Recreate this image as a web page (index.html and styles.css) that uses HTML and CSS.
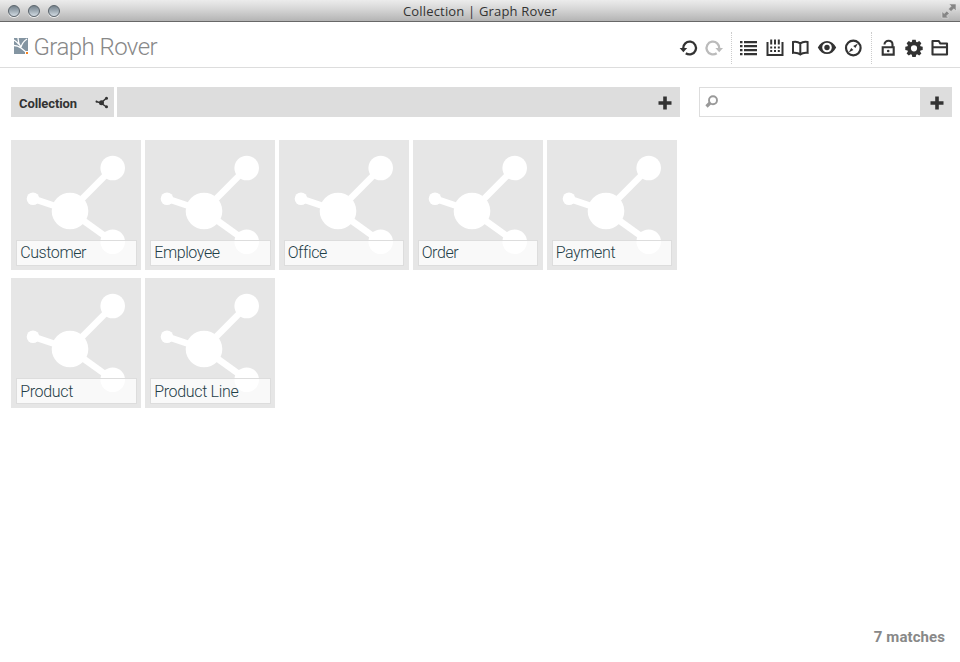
FILE: index.html
```html
<!DOCTYPE html>
<html lang="en">
<head>
<meta charset="utf-8">
<title>Collection | Graph Rover</title>
<link rel="stylesheet" href="styles.css">
</head>
<body>
<svg width="0" height="0" class="defs">
  <symbol id="graph" viewBox="0 0 130 130">
    <path d="M22 58.700 59 71 101.700 28M59 71l42.700 30.700" fill="none" stroke="#fff" stroke-width="6.500"/>
    <circle cx="59" cy="71" r="18.300"/><circle cx="101.700" cy="28" r="12.300"/><circle cx="22" cy="58.700" r="6.300"/><circle cx="101.700" cy="101.700" r="12.300"/>
  </symbol>
</svg>
<div class="window">
  <div class="titlebar">
    <div class="lights"><i></i><i></i><i></i></div>
    <div class="title">Collection | Graph Rover</div>
    <svg class="expand" width="16" height="16" viewBox="0 0 16 16"><path d="M8 1h7v7l-2.200-2.200L10 8.600 7.400 6l2.800-2.800zM1 8.500l2.200 2L5.800 8l2.400 2.400-2.600 2.600L7.500 15H1z" fill="#858585" stroke="#e0e0e0" stroke-width=".6"/></svg>
  </div>
  <header class="header">
    <div class="brand">
      <svg width="14" height="16" viewBox="0 0 14 16"><path d="M0 0h14v16H0z" fill="#8495a2"/><path d="M0 7.500c3 0 5 1 7 2.500l5.500 4.500M4 0c0 3 .5 6 3 9.500M13 1C10 3 8 5.500 7 9M0 2c1.500 1 3.500 2.500 4.800 4.500" fill="none" stroke="#fff" stroke-width="1.300"/><path d="M11 13h3v3h-3z" fill="#fff"/><path d="M12 14h2v2h-2z" fill="#f58220"/></svg>
      <span>Graph Rover</span>
    </div>
    <nav class="tools">
      <div class="group history">
        <svg viewBox="0 0 20 20"><path d="M4.200 10.500a6.400 6.400 0 1 1 2.600 4.700" fill="none" stroke="#333" stroke-width="2.300"/><path d="M.6 10h7.600l-3.800 4.300z"/></svg>
        <svg class="off" viewBox="0 0 20 20"><path d="M15.300 10.500a6.400 6.400 0 1 0-2.600 4.700" fill="none" stroke="#bbb" stroke-width="2.300"/><path d="M11.400 10H19l-3.800 4.300z"/></svg>
      </div>
      <div class="group views">
        <svg viewBox="0 0 20 20"><path d="M2 3h2.500v2.300H2zM6 3h13v2.300H6zM2 7h2.500v2.300H2zM6 7h13v2.300H6zM2 11h2.500v2.300H2zM6 11h13v2.300H6zM2 15h2.500v2.300H2zM6 15h13v2.300H6z"/></svg>
        <svg viewBox="0 0 20 20"><path d="M2.500 4v13h15V4" fill="none" stroke="#333" stroke-width="2"/><path d="M5.200 1.500h2v5h-2zM9 1.500h2v5H9zM12.800 1.500h2v5h-2zM5.200 8.500h2v2h-2zM9 8.500h2v2H9zM12.800 8.500h2v2h-2zM5.200 12h2v2h-2zM9 12h2v2H9zM12.800 12h2v2h-2z"/></svg>
        <svg viewBox="0 0 20 20"><path d="M2 4c3-.6 5.500 0 7.300 1.600C11.100 4 13.600 3.400 16.600 4v10.800c-3-.3-5.500.1-7.300 1.700C7.500 14.900 5 14.500 2 14.800zM9.300 5.600v11" fill="none" stroke="#333" stroke-width="2"/></svg>
        <svg viewBox="0 0 20 20"><path fill-rule="evenodd" d="M.8 9.500C3 5.200 6.200 2.900 10 2.900s7 2.300 9.200 6.600c-2.200 4.300-5.400 6.600-9.200 6.600S3 13.800.8 9.500zM5.200 9.500a4.800 4.800 0 1 0 9.600 0 4.800 4.800 0 0 0-9.600 0z"/><circle cx="10" cy="9.500" r="2.700"/></svg>
        <svg viewBox="0 0 20 20"><circle cx="10.300" cy="10" r="7.300" fill="none" stroke="#333" stroke-width="2.200"/><path d="M14.900 5.400l-2.500 4.700-2.200-2.200zM5.700 14.600l2.500-4.700 2.200 2.200z"/></svg>
      </div>
      <div class="group system">
        <svg viewBox="0 0 20 20"><path d="M6.500 6.500c0-5 8-5 8 0v3M4.700 9.300h11v7.300h-11z" fill="none" stroke="#333" stroke-width="2.100"/><circle cx="10.200" cy="13" r="1.300"/></svg>
        <svg viewBox="0 0 20 20"><path fill-rule="evenodd" transform="translate(0 -.8)" d="M8.300 2.500h3.400l.5 2.200 1 .4 2-1.300 2.200 2.200-1.300 2 .4 1 2.200.5v3.200l-2.200.5-.4 1 1.300 2-2.200 2.200-2-1.300-1 .4-.5 2.200H8.300l-.5-2.200-1-.4-2 1.300-2.200-2.200 1.300-2-.4-1-2.200-.5V9.500L3.500 9l.4-1-1.300-2 2.200-2.200 2 1.300 1-.4zM6.900 11.100a3.100 3.100 0 1 0 6.200 0 3.100 3.100 0 0 0-6.200 0z"/></svg>
        <svg viewBox="0 0 20 20"><path d="M2.500 3h6.300l1.500 2.500h6.700v11H2.500zM2.500 9.200H17" fill="none" stroke="#333" stroke-width="2.100" stroke-linejoin="round"/></svg>
      </div>
    </nav>
  </header>
  <div class="filters">
    <div class="chip"><b>Collection</b>
      <svg width="14" height="14" viewBox="0 0 14 14"><path d="M1 5.500l5 1.500 5.500-5M6 7l5.500 4" fill="none" stroke="#333" stroke-width="1.500"/><circle cx="1.500" cy="5.500" r="1"/><circle cx="6.500" cy="6.700" r="2.500"/><circle cx="11.500" cy="2.200" r="1.500"/><circle cx="11.500" cy="10.800" r="1.500"/></svg>
    </div>
    <div class="bar"><svg class="plus" viewBox="0 0 14 14"><path d="M5.200.5h3.600v4.700h4.700v3.600H8.800v4.700H5.200V8.800H.5V5.200h4.700z"/></svg></div>
    <div class="search">
      <svg width="14" height="14" viewBox="0 0 14 14"><circle cx="8" cy="5.300" r="4" fill="none" stroke="#999" stroke-width="1.900"/><path d="M5 8l-3.500 3.500" stroke="#999" stroke-width="3.200"/></svg>
      <div class="add"><svg class="plus" viewBox="0 0 14 14"><path d="M5.200.5h3.600v4.700h4.700v3.600H8.800v4.700H5.200V8.800H.5V5.200h4.700z"/></svg></div>
    </div>
  </div>
  <main class="tiles">
    <div class="tile"><svg><use href="#graph"/></svg><span>Customer</span></div>
    <div class="tile"><svg><use href="#graph"/></svg><span>Employee</span></div>
    <div class="tile narrow"><svg><use href="#graph"/></svg><span>Office</span></div>
    <div class="tile narrow"><svg><use href="#graph"/></svg><span>Order</span></div>
    <div class="tile narrow"><svg><use href="#graph"/></svg><span>Payment</span></div>
    <div class="tile low"><svg><use href="#graph"/></svg><span>Product</span></div>
    <div class="tile low"><svg><use href="#graph"/></svg><span>Product Line</span></div>
  </main>
  <footer class="matches">7 matches</footer>
</div>
</body>
</html>
```
FILE: styles.css
```css
* { box-sizing: border-box; }
body { margin: 0; background: #fff; font-family: Roboto, "Liberation Sans", sans-serif; color: #333; overflow: hidden; }
svg { display: block; flex: none; fill: #333; }
.defs { position: absolute; }
.window { height: 662px; display: flex; flex-direction: column; }
.titlebar { flex: none; height: 22px; display: flex; align-items: center; justify-content: space-between; padding: 0 3px 0 8px; background: linear-gradient(#ececec, #d8d8d8 40%, #b4b4b4); border-bottom: 1px solid #686868; }
.lights { display: flex; gap: 8px; width: 80px; }
.lights i { width: 12px; height: 12px; border-radius: 50%; border: 1px solid #59636b; background: linear-gradient(#75828c, #a0acb5 50%, #d3dce3); box-shadow: 0 1px 0 #eee; }
.title { font: 13px/20px "Open Sans", sans-serif; letter-spacing: .17px; color: #333; white-space: nowrap; margin-left: -5px; }
.expand { margin-left: 64px; }
.header { flex: none; height: 46px; display: flex; justify-content: space-between; align-items: center; border-bottom: 1px solid #ddd; padding: 0 10px 0 14px; }
.brand { display: flex; align-items: center; gap: 5.500px; font-size: 24px; font-weight: 300; color: #888; line-height: 30px; padding-top: 1px; }
.brand svg { margin-top: 1px; }
.brand span { padding-top: 4px; letter-spacing: -.55px; white-space: nowrap; }
.tools { display: flex; padding-top: 7px; }
.tools svg { width: 20px; height: 20px; }
.tools .off { fill: #bbb; }
.group { display: flex; align-items: center; height: 32px; margin-top: -1px; }
.history { gap: 5px; }
.views { gap: 6.300px; margin-left: 7px; padding-left: 6px; border-left: 1px dotted #ccc; }
.system { gap: 5.800px; margin-left: 8px; padding-left: 6px; border-left: 1px dotted #ccc; }
.filters { flex: none; display: flex; height: 30px; margin: 19px 8px 23px 11px; }
.chip { width: 103px; background: #ddd; display: flex; align-items: center; justify-content: space-between; padding: 2px 5px 0 8px; font-size: 13px; letter-spacing: -.1px; }
.bar { width: 563px; margin-left: 3px; background: #ddd; display: flex; align-items: center; justify-content: flex-end; padding: 1px 8px 0 0; }
.plus { width: 14px; height: 14px; }
.search { width: 253px; margin-left: 19px; border: 1px solid #ddd; display: flex; justify-content: space-between; padding-left: 5px; }
.search > svg { margin-top: 7px; }
.add { width: 31px; background: #ddd; display: flex; align-items: center; justify-content: center; padding: 1px 0 0 2px; }
.tiles { display: grid; grid-template-columns: repeat(5, 130px); grid-auto-rows: 130px; gap: 8px 4px; padding-left: 11px; }
.tile { background: #e6e6e6; display: grid; }
.tile svg { grid-area: 1 / 1; width: 130px; height: 130px; fill: #fff; }
.tile span { grid-area: 1 / 1; align-self: end; margin: 0 4px 4px 5px; height: 26px; border: 1px solid #ddd; background: rgba(255, 255, 255, .75); padding-left: 3.200px; font-size: 16px; line-height: 24px; font-weight: 300; letter-spacing: -.4px; color: #1f4048; z-index: 1; }
.tile.narrow span { margin: 0 5px 4px 4.500px; }
.tile.low span { line-height: 26px; letter-spacing: -.33px; }
.matches { margin-top: auto; align-self: flex-end; padding: 0 15px 15px 0; font-size: 15px; line-height: 20px; font-weight: 700; letter-spacing: .08px; color: #888; }
```
